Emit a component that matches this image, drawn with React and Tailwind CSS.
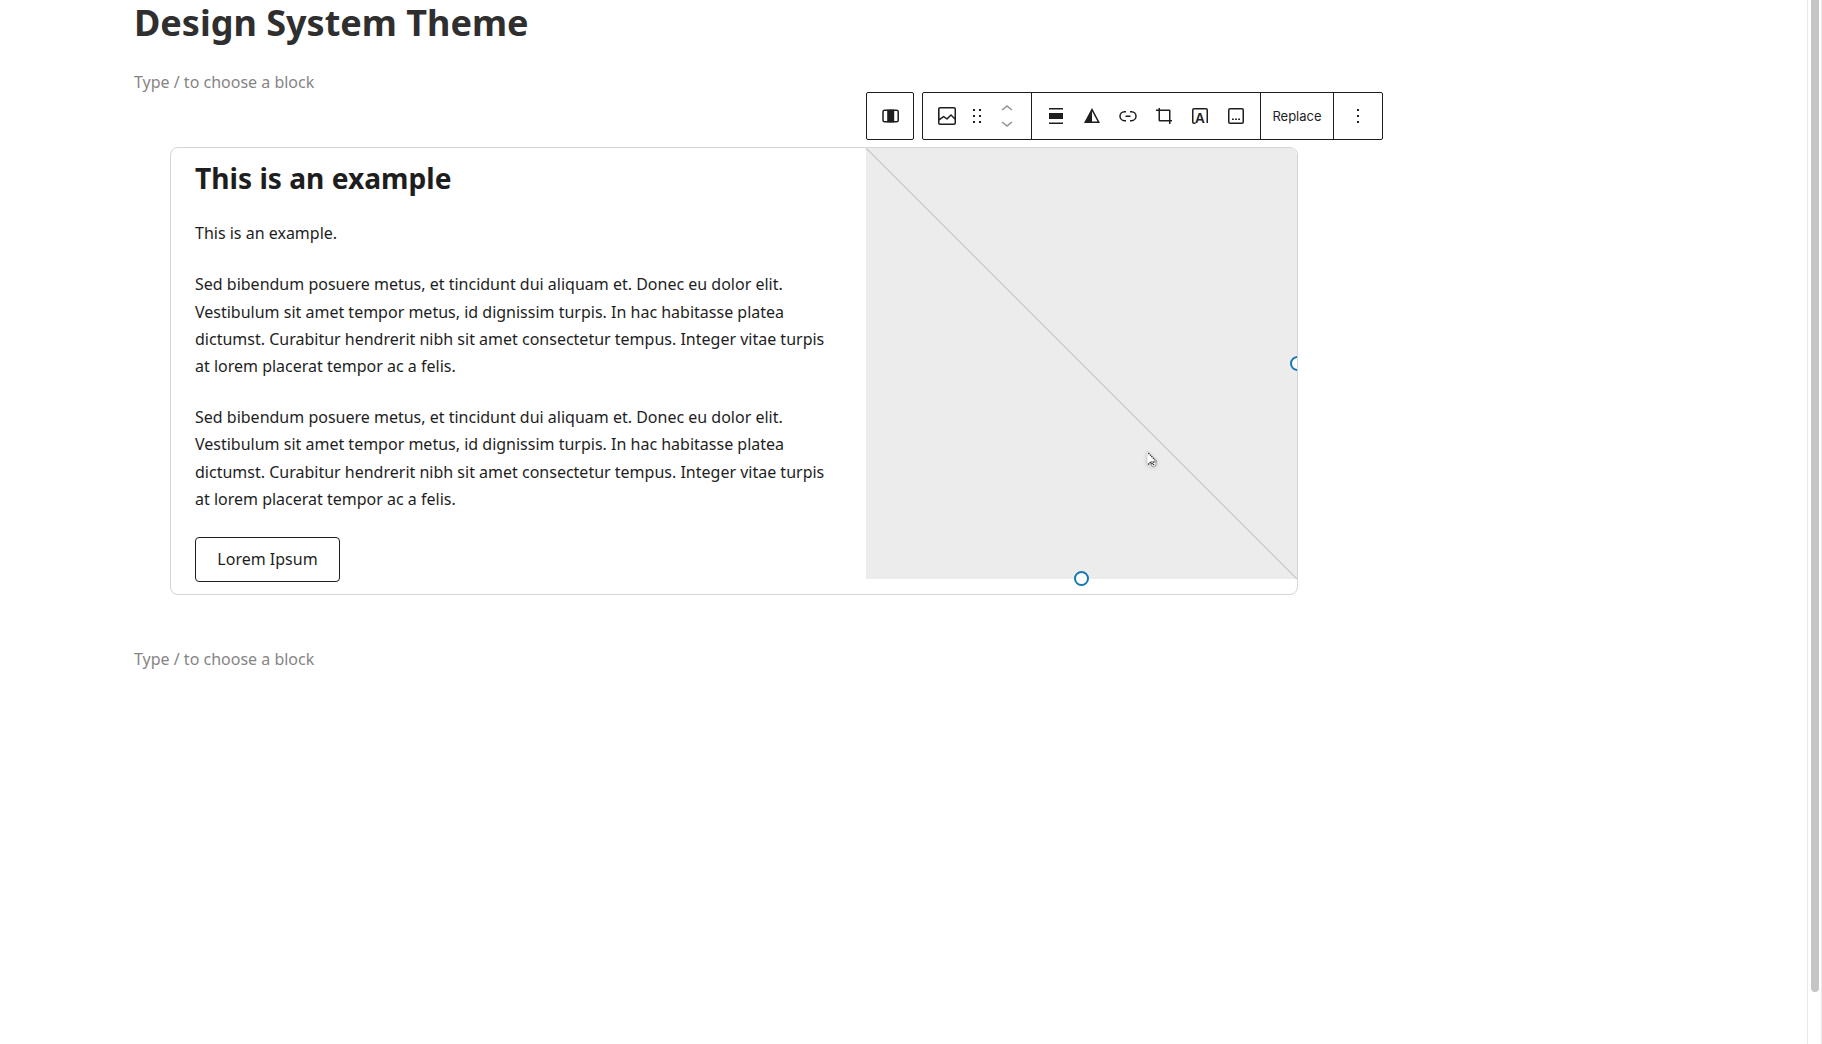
import React from "react";

function Icon({ children, className = "" }) {
  return (
    <svg viewBox="0 0 24 24" fill="currentColor" className={`h-6 w-6 shrink-0 ${className}`}>
      {children}
    </svg>
  );
}

function IconButton({ label, children }) {
  return (
    <button aria-label={label} className="flex h-full w-9 items-center justify-center">
      {children}
    </button>
  );
}

function Toolbar() {
  return (
    <div className="flex h-12 gap-2 text-[#1e1e1e]">
      <div className="flex w-12 items-center justify-center rounded-[2px] border border-[#1e1e1e] bg-white">
        <Icon>
          <rect x="5" y="6.15" width="15.2" height="11.7" rx="1.5" fill="none" stroke="currentColor" strokeWidth="1.5" />
          <rect x="9.2" y="5.6" width="7" height="12.8" />
        </Icon>
      </div>
      <div className="flex w-[461px] rounded-[2px] border border-[#1e1e1e] bg-white">
        <div className="flex w-[109px] items-center border-r border-[#1e1e1e] pl-3">
          <Icon>
            <path d="M19 3H5c-1.1 0-2 .9-2 2v14c0 1.1.9 2 2 2h14c1.1 0 2-.9 2-2V5c0-1.1-.9-2-2-2zM5 4.5h14c.3 0 .5.2.5.5v8.4l-3-2.9c-.3-.3-.8-.3-1 0L11.9 14 9 12c-.3-.2-.6-.2-.8 0l-3.6 2.6V5c-.1-.3.1-.5.4-.5zm14 15H5c-.3 0-.5-.2-.5-.5v-2.4l4.1-3 3 1.9c.3.2.7.2.9-.1L16 12l3.5 3.4V19c0 .3-.2.5-.5.5z" />
          </Icon>
          <Icon className="ml-1.5">
            <path d="M8 7h2V5H8v2zm0 6h2v-2H8v2zm0 6h2v-2H8v2zm6-14v2h2V5h-2zm0 8h2v-2h-2v2zm0 6h2v-2h-2v2z" />
          </Icon>
          <div className="ml-1.5 flex flex-col text-[#949494]">
            <Icon className="-mb-2.5">
              <path d="M6.5 12.4L12 8l5.5 4.4-.9 1.2L12 10l-4.5 3.6-1-1.2z" />
            </Icon>
            <Icon>
              <path d="M17.5 11.6L12 16l-5.5-4.4.9-1.2L12 14l4.5-3.6 1 1.2z" />
            </Icon>
          </div>
        </div>
        <div className="flex w-[229px] items-center border-r border-[#1e1e1e] pl-1.5">
          <IconButton label="Align">
            <Icon>
              <path d="M19 5.5H5V4h14v1.5ZM19 20H5v-1.5h14V20ZM5 9h14v6H5V9Z" />
            </Icon>
          </IconButton>
          <IconButton label="Duotone">
            <Icon>
              <path d="M12 4 4 19h16L12 4zm0 3.2 5.5 10.3H12V7.2z" />
            </Icon>
          </IconButton>
          <IconButton label="Link">
            <Icon>
              <path d="M10 17.389H8.444A5.194 5.194 0 1 1 8.444 7H10v1.5H8.444a3.694 3.694 0 0 0 0 7.389H10v1.5ZM14 7h1.556a5.194 5.194 0 0 1 0 10.39H14v-1.5h1.556a3.694 3.694 0 0 0 0-7.39H14V7Zm-4.5 6h5v-1.5h-5V13Z" />
            </Icon>
          </IconButton>
          <IconButton label="Crop">
            <Icon>
              <path d="M7.25 4v12.25c0 .3.2.5.5.5H20M4 6.25h13.25c.3 0 .5.2.5.5V20" fill="none" stroke="currentColor" strokeWidth="1.5" />
            </Icon>
          </IconButton>
          <IconButton label="Add text over image">
            <Icon>
              <path d="M7.5 19.25H6A1.25 1.25 0 0 1 4.75 18V6A1.25 1.25 0 0 1 6 4.75h12A1.25 1.25 0 0 1 19.25 6v12.9" fill="none" stroke="currentColor" strokeWidth="1.5" />
              <text x="12" y="19.1" textAnchor="middle" fontSize="13.5" fontWeight="600" className="font-['Inter',sans-serif]">A</text>
            </Icon>
          </IconButton>
          <IconButton label="Caption">
            <Icon>
              <rect x="4.75" y="4.75" width="14.5" height="14.5" rx="1.25" fill="none" stroke="currentColor" strokeWidth="1.5" />
              <path d="M8 14.5h1.8v1.6H8zM11.1 14.5h1.8v1.6h-1.8zM14.2 14.5H16v1.6h-1.8z" />
            </Icon>
          </IconButton>
        </div>
        <button className="flex w-[73px] items-center justify-center border-r border-[#1e1e1e] pt-0.5 font-['Inter',sans-serif] text-[13px]">
          Replace
        </button>
        <div className="flex flex-1 items-center justify-center">
          <Icon>
            <path d="M13 19h-2v-2h2v2zm0-6h-2v-2h2v2zm0-6h-2V5h2v2z" />
          </Icon>
        </div>
      </div>
    </div>
  );
}

function Handle({ className }) {
  return <span className={`absolute h-[15px] w-[15px] rounded-full border-2 border-[#1679b0] bg-white ${className}`} />;
}

function Placeholder() {
  return (
    <div className="relative h-[431px] w-[431px] shrink-0 bg-[#ececec]">
      <svg viewBox="0 0 431 431" className="h-full w-full">
        <path d="M0 0 431 431" stroke="#cbcbcb" strokeWidth="1.4" />
      </svg>
      <Handle className="-bottom-[7px] left-[208px]" />
      <Handle className="-right-[8px] top-[208px]" />
      <svg viewBox="0 0 14 18" className="absolute left-[280px] top-[302px] h-[18px] w-[14px] drop-shadow-sm">
        <path d="M1 1v14.5l3.3-2.8L12 12z" fill="#fff" stroke="#c4c4c4" strokeWidth=".6" />
        <circle cx="7.6" cy="14" r="2.6" fill="#fff" stroke="#8a8a8a" strokeWidth=".9" />
        <path d="M2.3 3 10.5 11.5M2 14.5l3.5-3.3M5.5 14l3-2.5M7 15l1.5-1.2" fill="none" stroke="#333" strokeWidth="1.2" strokeDasharray="1.5 .7" />
      </svg>
    </div>
  );
}

const lorem =
  "Sed bibendum posuere metus, et tincidunt dui aliquam et. Donec eu dolor elit. Vestibulum sit amet tempor metus, id dignissim turpis. In hac habitasse platea dictumst. Curabitur hendrerit nibh sit amet consectetur tempus. Integer vitae turpis at lorem placerat tempor ac a felis.";

export default function App() {
  return (
    <div className="flex h-[1044px] w-[1822px] overflow-hidden bg-white font-['Noto_Sans',sans-serif] text-base leading-[27.2px] text-[#1e1e1e]">
      <main className="flex-1 pl-[134px]">
        <h1 className="h-[69px] text-4xl leading-[46px] font-bold text-[#2f2f2f]">Design System Theme</h1>
        <p className="h-[23px] text-[#858585]">Type / to choose a block</p>
        <div className="ml-[732px]">
          <Toolbar />
        </div>
        <section className="mt-[7px] ml-9 flex h-[448px] w-[1128px] overflow-hidden rounded-lg border border-[#d5d5d5]">
          <div className="w-[695px] pl-6">
            <h2 className="pt-[11px] text-[28.15px] leading-[38px] font-bold">This is an example</h2>
            <p className="mt-[23.2px]">This is an example.</p>
            <p className="mt-6 w-[640px]">{lorem}</p>
            <p className="mt-6 w-[640px]">{lorem}</p>
            <button className="mt-[24px] flex h-[45px] w-[145px] items-center justify-center rounded border border-[#1e1e1e]">
              Lorem Ipsum
            </button>
          </div>
          <Placeholder />
        </section>
        <p className="mt-[51px] text-[#858585]">Type / to choose a block</p>
      </main>
      <aside className="w-[15px] border-x border-[#e8e8e8] pl-[3px]">
        <div className="h-[992px] w-2 rounded-b-full bg-[#c5c5c5]" />
      </aside>
    </div>
  );
}
